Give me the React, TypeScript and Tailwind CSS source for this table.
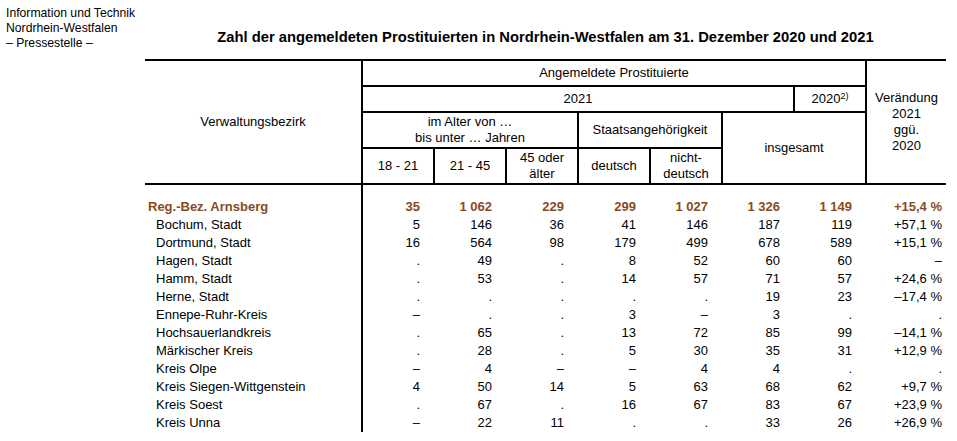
const rows: { name: string; values: string[]; total?: boolean }[] = [
  { name: "Reg.-Bez. Arnsberg", values: ["35", "1 062", "229", "299", "1 027", "1 326", "1 149", "+15,4 %"], total: true },
  { name: "Bochum, Stadt", values: ["5", "146", "36", "41", "146", "187", "119", "+57,1 %"] },
  { name: "Dortmund, Stadt", values: ["16", "564", "98", "179", "499", "678", "589", "+15,1 %"] },
  { name: "Hagen, Stadt", values: [".", "49", ".", "8", "52", "60", "60", "–"] },
  { name: "Hamm, Stadt", values: [".", "53", ".", "14", "57", "71", "57", "+24,6 %"] },
  { name: "Herne, Stadt", values: [".", ".", ".", ".", ".", "19", "23", "–17,4 %"] },
  { name: "Ennepe-Ruhr-Kreis", values: ["–", ".", ".", "3", "–", "3", ".", "."] },
  { name: "Hochsauerlandkreis", values: [".", "65", ".", "13", "72", "85", "99", "–14,1 %"] },
  { name: "Märkischer Kreis", values: [".", "28", ".", "5", "30", "35", "31", "+12,9 %"] },
  { name: "Kreis Olpe", values: ["–", "4", "–", "–", "4", "4", ".", "."] },
  { name: "Kreis Siegen-Wittgenstein", values: ["4", "50", "14", "5", "63", "68", "62", "+9,7 %"] },
  { name: "Kreis Soest", values: [".", "67", ".", "16", "67", "83", "67", "+23,9 %"] },
  { name: "Kreis Unna", values: ["–", "22", "11", ".", ".", "33", "26", "+26,9 %"] },
];

export default function App() {
  return (
    <div className="flex w-[957px] h-[441px] overflow-hidden bg-white text-black font-['Liberation_Sans',Arial,sans-serif]">
      {/* left: issuing office */}
      <div className="w-[145px] shrink-0 pl-[6px] pt-[6px] text-[12.2px] leading-[15px]">
        <div>Information und Technik</div>
        <div>Nordrhein-Westfalen</div>
        <div>– Pressestelle –</div>
      </div>

      {/* right: title + table */}
      <div className="w-[801px] shrink-0">
        <h1 className="pt-[29px] h-[59px] text-center text-[14.75px] leading-[17px] font-bold">
          Zahl der angemeldeten Prostituierten in Nordrhein-Westfalen am 31. Dezember 2020 und 2021
        </h1>

        <table className="w-[801px] table-fixed border-collapse text-[13px]">
          <colgroup>
            <col className="w-[217px]" />
            <col className="w-[72px]" />
            <col className="w-[72px]" />
            <col className="w-[72px]" />
            <col className="w-[72px]" />
            <col className="w-[72px]" />
            <col className="w-[72px]" />
            <col className="w-[72px]" />
            <col className="w-[80px]" />
          </colgroup>
          <thead className="leading-[16px]">
            <tr className="h-[26px]">
              <th rowSpan={4} className="font-normal border-y-2 border-r-2 border-black">
                Verwaltungsbezirk
              </th>
              <th colSpan={7} className="font-normal border-2 border-black">
                Angemeldete Prostituierte
              </th>
              <th rowSpan={4} className="font-normal border-y-2 border-l-2 border-black">
                Verändung
                <br />
                2021
                <br />
                ggü.
                <br />
                2020
              </th>
            </tr>
            <tr className="h-[26px]">
              <th colSpan={6} className="font-normal border-2 border-black">
                2021
              </th>
              <th className="font-normal border-2 border-black">
                2020<sup className="text-[9px]">2)</sup>
              </th>
            </tr>
            <tr className="h-[36px]">
              <th colSpan={3} className="font-normal border-2 border-black">
                im Alter von …
                <br />
                bis unter … Jahren
              </th>
              <th colSpan={2} className="font-normal border-2 border-black">
                Staatsangehörigkeit
              </th>
              <th colSpan={2} rowSpan={2} className="font-normal border-2 border-black">
                insgesamt
              </th>
            </tr>
            <tr className="h-[36px]">
              <th className="font-normal border-2 border-black">18 - 21</th>
              <th className="font-normal border-2 border-black">21 - 45</th>
              <th className="font-normal border-2 border-black">
                45 oder
                <br />
                älter
              </th>
              <th className="font-normal border-2 border-black">deutsch</th>
              <th className="font-normal border-2 border-black">
                nicht-
                <br />
                deutsch
              </th>
            </tr>
          </thead>
          <tbody className="leading-[18px]">
            {rows.map((r, i) => (
              <tr key={r.name} className={r.total ? "font-bold text-[#8b4a1c]" : ""}>
                <td className={`${i === 0 ? "pt-[13px]" : ""} ${r.total ? "pl-[3px]" : "pl-[11px]"} p-0 whitespace-nowrap`}>
                  {r.name}
                </td>
                {r.values.map((v, j) => (
                  <td
                    key={j}
                    className={`${i === 0 ? "pt-[13px]" : ""} ${j === 0 ? "border-l-2 border-black" : ""} ${j === 7 ? "pr-[4px]" : "pr-[14px]"} text-right whitespace-nowrap`}
                  >
                    {v}
                  </td>
                ))}
              </tr>
            ))}
          </tbody>
        </table>
      </div>
    </div>
  );
}
